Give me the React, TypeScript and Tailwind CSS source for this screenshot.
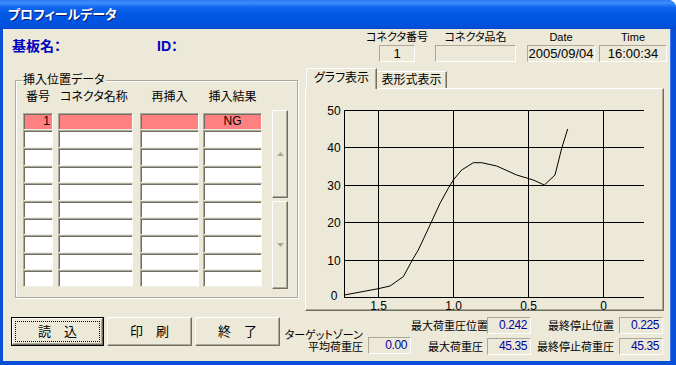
import React from 'react';

const sunkenBox =
  'border border-t-[#aca899] border-l-[#aca899] border-r-white border-b-white';
const cellBase =
  'border border-t-[#aca899] border-l-[#aca899] border-r-white border-b-[#f1efe2] shadow-[inset_1px_1px_0_#716f64]';
const raised =
  'border border-t-white border-l-white border-r-[#716f64] border-b-[#716f64] shadow-[inset_-1px_-1px_0_#aca899]';

const rowHeights = [
  'h-[17px]',
  'h-[18px]',
  'h-[18px]',
  'h-[17px]',
  'h-[18px]',
  'h-[17px]',
  'h-[17px]',
  'h-[18px]',
  'h-[17px]',
  'h-[17px]',
];

const curve: [number, number][] = [
  [344.3, 295],
  [378.3, 288.7],
  [390, 286],
  [403.3, 276.7],
  [413.3, 258.3],
  [418.3, 250],
  [430, 225],
  [440, 203.3],
  [448.3, 188.3],
  [453.3, 180],
  [461.7, 170],
  [473.3, 162.7],
  [481.7, 162.7],
  [496.7, 166],
  [516.7, 175],
  [533.3, 180],
  [544.3, 185],
  [555, 175],
  [561.7, 148.3],
  [567.7, 129],
];

function Chart() {
  const hLines = [110, 147, 185, 222, 260, 297];
  const yLabels = ['50', '40', '30', '20', '10', '0'];
  const vLines = [378, 453, 528, 603];
  const xLabels = ['1.5', '1.0', '0.5', '0'];
  return (
    <svg width={357} height={221} viewBox="306 89 357 221" className="block overflow-visible">
      {hLines.map((y) => (
        <line key={y} x1={344} x2={644} y1={y + 0.5} y2={y + 0.5} stroke="#000" strokeWidth={1} />
      ))}
      {vLines.map((x) => (
        <line key={x} x1={x + 0.5} x2={x + 0.5} y1={110} y2={297} stroke="#000" strokeWidth={1} />
      ))}
      <line x1={344.5} x2={344.5} y1={110} y2={298} stroke="#000" strokeWidth={1} />
      {hLines.map((y, i) => (
        <text
          key={'yl' + y}
          x={334}
          y={(i === 5 ? 295.5 : y + 1) + 4.3}
          textAnchor="middle"
          fontSize={12}
          fontFamily="'Liberation Sans', sans-serif"
          fill="#000"
        >
          {yLabels[i]}
        </text>
      ))}
      {vLines.map((x, i) => (
        <text
          key={'xl' + x}
          x={x + 0.5}
          y={309.5}
          textAnchor="middle"
          fontSize={12}
          fontFamily="'Liberation Sans', sans-serif"
          fill="#000"
        >
          {xLabels[i]}
        </text>
      ))}
      <polyline
        points={curve.map(([x, y]) => `${x},${y}`).join(' ')}
        fill="none"
        stroke="#000"
        strokeWidth={1}
      />
    </svg>
  );
}

function Arrow({ up }: { up: boolean }) {
  return (
    <svg width={7} height={4} viewBox="0 0 7 4" className="block">
      {up ? <polygon points="0,4 7,4 3.5,0" fill="#aca899" /> : <polygon points="0,0 7,0 3.5,4" fill="#aca899" />}
    </svg>
  );
}

function ValueBox({ value, extra }: { value: string; extra?: string }) {
  return (
    <div
      className={`${sunkenBox} h-[17px] text-right pr-[3px] text-[12px] leading-[15px] tracking-[-0.4px] text-[#00009c] ${extra ?? ''}`}
    >
      {value}
    </div>
  );
}

export default function App() {
  return (
    <div className="w-[676px] h-[365px] bg-white font-['Liberation_Sans','Noto_Sans_CJK_JP',sans-serif] [font-feature-settings:'palt'] text-black">
      <div className="w-[676px] h-[365px] flex flex-col rounded-tr-[8px] overflow-hidden bg-[#0a4fd8]">
        {/* Title bar */}
        <div className="h-[29px] shrink-0 flex items-center pl-[8px] bg-[linear-gradient(to_bottom,#2b7af5_0%,#3d8ffc_10%,#0f66ee_25%,#0058e6_50%,#0054e2_75%,#0350dc_92%,#0a47c8_100%)]">
          <span className="text-[13px] leading-[15px] font-bold text-white [text-shadow:1px_1px_0_#0a1e70]">
            プロフィールデータ
          </span>
        </div>

        {/* Body */}
        <div className="ml-[3px] mr-[5px] mb-[4px] flex-1 bg-[#ece9d8] flex flex-col border-r border-r-[#3a76e8]">
          {/* Top row */}
          <div className="h-[34px] shrink-0 flex items-start">
            <span className="ml-[9px] mt-[10px] w-[145px] text-[14px] leading-[15px] font-bold text-[#0000c0]">
              基板名：
            </span>
            <span className="mt-[10px] text-[14px] leading-[15px] font-bold text-[#0000c0]">ID：</span>
            <div className="ml-auto mr-[3px] flex items-start">
              <div className="flex flex-col items-center w-[36px] mr-[20px]">
                <span className="mt-[2px] h-[12px] text-[11px] leading-[12px] whitespace-nowrap">コネクタ番号</span>
                <div className={`mt-[2px] w-full h-[17px] ${sunkenBox} text-[13px] leading-[15px] text-center`}>1</div>
              </div>
              <div className="flex flex-col items-center w-[81px] mr-[11px]">
                <span className="mt-[2px] h-[12px] text-[11px] leading-[12px] whitespace-nowrap">コネクタ品名</span>
                <div className={`mt-[2px] w-full h-[17px] ${sunkenBox}`}></div>
              </div>
              <div className="flex flex-col items-center w-[68px] mr-[4px]">
                <span className="mt-[2px] h-[12px] text-[11px] leading-[12px] whitespace-nowrap">Date</span>
                <div className={`mt-[2px] w-full h-[17px] ${sunkenBox} text-[13px] leading-[15px] text-center`}>
                  2005/09/04
                </div>
              </div>
              <div className="flex flex-col items-center w-[68px]">
                <span className="mt-[2px] h-[12px] text-[11px] leading-[12px] whitespace-nowrap">Time</span>
                <div className={`mt-[2px] w-full h-[17px] ${sunkenBox} text-[13px] leading-[15px] text-center`}>
                  16:00:34
                </div>
              </div>
            </div>
          </div>

          {/* Middle row */}
          <div className="h-[249px] shrink-0 flex items-start pl-[12px]">
            {/* Group box */}
            <div className="relative mt-[17px] w-[283px] h-[218px] border border-[#aca899] shadow-[1px_1px_0_#fff,inset_1px_1px_0_#fff]">
              <span className="absolute left-[6px] top-[-7px] px-[1px] bg-[#ece9d8] text-[12px] leading-[12px] whitespace-nowrap">
                挿入位置データ
              </span>
              <div className="flex items-start pt-[10px] pl-[7px]">
                <div className="flex flex-col">
                  <div className="flex h-[13px] text-[12px] leading-[13px] whitespace-nowrap">
                    <div className="w-[30px] text-center">番号</div>
                    <div className="w-[75px] ml-[5px] pl-[2px]">コネクタ名称</div>
                    <div className="w-[59px] ml-[7px] text-center">再挿入</div>
                    <div className="w-[59px] ml-[4px] text-center">挿入結果</div>
                  </div>
                  <div className="mt-[9px] flex flex-col">
                    {rowHeights.map((h, i) => (
                      <div key={i} className={`flex ${h}`}>
                        <div
                          className={`w-[30px] ${cellBase} ${i === 0 ? 'bg-[#ff8080]' : 'bg-white'} text-[12px] leading-[14px] text-right pr-[2px]`}
                        >
                          {i === 0 ? '1' : ''}
                        </div>
                        <div className={`w-[75px] ml-[5px] ${cellBase} ${i === 0 ? 'bg-[#ff8080]' : 'bg-white'}`}></div>
                        <div className={`w-[59px] ml-[7px] ${cellBase} ${i === 0 ? 'bg-[#ff8080]' : 'bg-white'}`}></div>
                        <div
                          className={`w-[59px] ml-[4px] ${cellBase} ${i === 0 ? 'bg-[#ff8080]' : 'bg-white'} text-[12px] leading-[14px] text-center`}
                        >
                          {i === 0 ? 'NG' : ''}
                        </div>
                      </div>
                    ))}
                  </div>
                </div>
                <div className="ml-[10px] mt-[19px] w-[16px] flex flex-col">
                  <div className={`h-[88px] ${raised} flex items-center justify-center`}>
                    <Arrow up={true} />
                  </div>
                  <div className={`mt-[3px] h-[88px] ${raised} flex items-center justify-center`}>
                    <Arrow up={false} />
                  </div>
                </div>
              </div>
            </div>

            {/* Tab control */}
            <div className="ml-[7px] mt-[5px] w-[359px] flex flex-col">
              <div className="h-[20px] flex items-end pl-[1px]">
                <div className="relative z-10 -mb-px w-[71px] h-[21px] bg-[#ece9d8] border-l border-t border-l-white border-t-white border-r border-r-[#716f64] rounded-tl-[2px] shadow-[inset_-1px_0_0_#aca899] flex items-center justify-center pb-[2px] text-[12px] leading-[13px] whitespace-nowrap">
                  グラフ表示
                </div>
                <div className="w-[70px] h-[17px] border-t border-t-white border-r border-r-[#716f64] shadow-[inset_-1px_0_0_#aca899] flex items-center justify-center text-[12px] leading-[13px] whitespace-nowrap">
                  表形式表示
                </div>
              </div>
              <div className="h-[223px] border border-t-white border-l-white border-r-[#716f64] border-b-[#716f64] shadow-[inset_-1px_-1px_0_#aca899]">
                <Chart />
              </div>
            </div>
          </div>

          {/* Bottom row */}
          <div className="h-[49px] shrink-0 flex items-start pl-[8px]">
            <div className="mt-[5px] w-[93px] h-[29px] border border-black">
              <div className={`h-full ${raised} p-[2px]`}>
                <div className="h-full border border-dotted border-black flex items-center justify-center text-[13px] leading-[14px] whitespace-pre">
                  読　込
                </div>
              </div>
            </div>
            <div
              className={`ml-[3px] mt-[5px] w-[85px] h-[29px] ${raised} flex items-center justify-center text-[13px] leading-[14px] whitespace-pre`}
            >
              印　刷
            </div>
            <div
              className={`ml-[3px] mt-[5px] w-[85px] h-[29px] ${raised} flex items-center justify-center text-[13px] leading-[14px] whitespace-pre`}
            >
              終　了
            </div>
            <div className="w-[131px] flex justify-end items-start">
              <div className="mt-[17px] flex flex-col items-end text-[11px] leading-[12px] whitespace-nowrap">
                <span>ターゲットゾーン</span>
                <span>平均荷重圧</span>
              </div>
              <ValueBox value="0.00" extra="ml-[5px] mt-[25px] w-[43px]" />
            </div>
            <div className="mt-[5px] grid grid-cols-[76px_44px_88px_44px] auto-rows-[17px] gap-y-[4px] items-center text-[11px] leading-[12px] whitespace-nowrap">
              <span className="text-right pr-[4px]">最大荷重圧位置</span>
              <ValueBox value="0.242" />
              <span className="text-right pr-[5px]">最終停止位置</span>
              <ValueBox value="0.225" />
              <span className="text-right pr-[4px]">最大荷重圧</span>
              <ValueBox value="45.35" />
              <span className="text-right pr-[5px]">最終停止荷重圧</span>
              <ValueBox value="45.35" />
            </div>
          </div>
        </div>
      </div>
    </div>
  );
}
